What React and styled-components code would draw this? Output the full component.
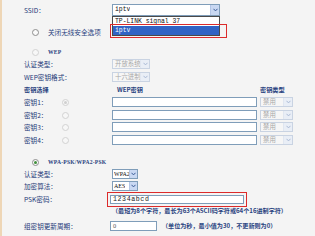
import styled, { createGlobalStyle } from "styled-components";

const GlobalStyle = createGlobalStyle`
  html, body {
    margin: 0;
    padding: 0;
    background: #f4f4f4;
  }
  body {
    font-family: "Noto Sans CJK SC", "DejaVu Sans", sans-serif;
  }
`;

const keys = [1, 2, 3, 4];

export default function App() {
  return (
    <>
      <GlobalStyle />
      <Page>
        <Row $mt={4}>
          <Label>SSID：</Label>
          <SelectWrap>
            <Select $w={108} $h={12} $mono>
              <SelectText>iptv</SelectText>
              <Arrow $h={10}>
                <Chevron />
              </Arrow>
            </Select>
            <DropList>
              <DropItem>TP-LINK signal 37</DropItem>
              <DropItem $active>iptv</DropItem>
            </DropList>
            <RedBox />
          </SelectWrap>
        </Row>

        <Row $mt={10}>
          <RadioCell>
            <Radio />
          </RadioCell>
          <RadioText>关闭无线安全选项</RadioText>
        </Row>

        <Row $mt={8}>
          <RadioCell>
            <Radio $faded />
          </RadioCell>
          <RadioText $small>WEP</RadioText>
        </Row>

        <Row>
          <Label>认证类型：</Label>
          <Select $w={38} $disabled>
            <SelectText>开放系统</SelectText>
            <Arrow $disabled>
              <Chevron $disabled />
            </Arrow>
          </Select>
        </Row>

        <Row $mt={1}>
          <Label>WEP密钥格式：</Label>
          <Select $w={38} $disabled>
            <SelectText>十六进制</SelectText>
            <Arrow $disabled>
              <Chevron $disabled />
            </Arrow>
          </Select>
        </Row>

        <KeyGrid $mt={1}>
          <HeadText style={{ gridColumn: "1 / 3" }}>密钥选择</HeadText>
          <HeadText $pl={5}>WEP密钥</HeadText>
          <HeadText $pl={3}>密钥类型</HeadText>
        </KeyGrid>

        {keys.map((k) => (
          <KeyGrid key={k} $mt={k % 2 === 0 ? 1 : 0}>
            <Label>密钥{k}：</Label>
            <RadioSlot>
              <Radio $faded $dot={k === 1} />
            </RadioSlot>
            <TextInput $w={145} />
            <Select $w={33} $disabled>
              <SelectText>禁用</SelectText>
              <Arrow $disabled>
                <Chevron $disabled />
              </Arrow>
            </Select>
          </KeyGrid>
        ))}

        <Row $mt={10}>
          <RadioCell>
            <Radio $checked />
          </RadioCell>
          <RadioText $small>WPA-PSK/WPA2-PSK</RadioText>
        </Row>

        <Row>
          <Label>认证类型：</Label>
          <Select $w={26} $tight>
            <SelectText>WPA2</SelectText>
            <Arrow $narrow>
              <Chevron />
            </Arrow>
          </Select>
        </Row>

        <Row>
          <Label>加密算法：</Label>
          <Select $w={26} $tight>
            <SelectText>AES</SelectText>
            <Arrow $narrow>
              <Chevron />
            </Arrow>
          </Select>
        </Row>

        <Row $mt={1}>
          <Label>PSK密码：</Label>
          <PskFrame>
            <PskInput>1234abcd</PskInput>
          </PskFrame>
        </Row>

        <Row>
          <Label />
          <Note>（最短为8个字符，最长为63个ASCII码字符或64个16进制字符）</Note>
        </Row>

        <Row $mt={3}>
          <Label>组密钥更新周期：</Label>
          <GroupInput>0</GroupInput>
          <Note $pl={5}>（单位为秒，最小值为30，不更新则为0）</Note>
        </Row>
      </Page>
    </>
  );
}

function Chevron({ $disabled }) {
  return (
    <svg width="5" height="4" viewBox="0 0 5 4">
      <path
        d="M0.5 0.8 L2.5 2.9 L4.5 0.8"
        fill="none"
        stroke={$disabled ? "#a9b9d4" : "#3a5a96"}
        strokeWidth="1"
      />
    </svg>
  );
}

const Page = styled.div`
  width: 315px;
  height: 236px;
  box-sizing: border-box;
  padding-left: 24px;
  border-left: 2px solid #eed6b6;
  overflow: hidden;
  color: #1f3a78;
  font-size: 6.6px;
  line-height: 12px;
`;

const Row = styled.div`
  display: flex;
  align-items: center;
  height: 12px;
  margin-top: ${(p) => p.$mt || 0}px;
  margin-left: -2px;
`;

const Label = styled.div`
  width: 88px;
  flex: none;
  white-space: nowrap;
  color: #1f3a78;
`;

const RadioCell = styled.div`
  width: 24px;
  flex: none;
  display: flex;
  justify-content: flex-start;
  padding-left: 8px;
  box-sizing: border-box;
`;

const RadioText = styled.span`
  white-space: nowrap;
  font-size: ${(p) => (p.$small ? "5.6px" : "6.6px")};
  font-family: ${(p) =>
    p.$small
      ? '"Liberation Serif", "Noto Sans CJK SC", serif'
      : '"Noto Sans CJK SC", sans-serif'};
  font-weight: ${(p) => (p.$small ? 700 : 400)};
  color: #2a4380;
  letter-spacing: ${(p) => (p.$small ? "0.2px" : "0")};
`;

const Radio = styled.span`
  width: 7px;
  height: 7px;
  border-radius: 50%;
  box-sizing: border-box;
  border: 1px solid ${(p) => (p.$faded ? "#d2d2d2" : "#8e8e8e")};
  background: ${(p) => (p.$faded ? "#f7f7f7" : "#fafafa")};
  display: inline-flex;
  align-items: center;
  justify-content: center;
  &::after {
    content: "";
    width: 3px;
    height: 3px;
    border-radius: 50%;
    background: ${(p) =>
      p.$checked ? "#3f8f3a" : p.$dot ? "#cfcfcf" : "transparent"};
  }
`;

const SelectWrap = styled.div`
  position: relative;
`;

const Select = styled.div`
  width: ${(p) => p.$w}px;
  height: ${(p) => p.$h || 10}px;
  box-sizing: border-box;
  border: 1px solid ${(p) => (p.$disabled ? "#c9d3e2" : "#7f9db9")};
  background: ${(p) => (p.$disabled ? "#f6f6f6" : "#ffffff")};
  color: ${(p) => (p.$disabled ? "#a8a8a8" : "#111")};
  display: flex;
  align-items: center;
  justify-content: space-between;
  padding-left: ${(p) => (p.$tight ? 1 : 2)}px;
  font-family: ${(p) =>
    p.$mono
      ? '"Liberation Mono", monospace'
      : '"Liberation Serif", "Noto Sans CJK SC", serif'};
  font-size: ${(p) => (p.$tight ? 6 : 6.4)}px;
  line-height: 8px;
  flex: none;
`;

const SelectText = styled.span`
  white-space: nowrap;
  overflow: hidden;
`;

const Arrow = styled.span`
  width: ${(p) => (p.$narrow ? 7 : 8)}px;
  height: ${(p) => p.$h || 8}px;
  flex: none;
  background: ${(p) => (p.$disabled ? "#e9eef6" : "#c9d8f2")};
  border-left: 1px solid ${(p) => (p.$disabled ? "#e0e6f0" : "#b3c5e6")};
  display: flex;
  align-items: center;
  justify-content: center;
`;

const DropList = styled.div`
  position: absolute;
  left: 0;
  top: 12px;
  width: 108px;
  box-sizing: border-box;
  border: 1px solid #4a4a4a;
  background: #fff;
  z-index: 2;
`;

const DropItem = styled.div`
  height: 9px;
  line-height: 9px;
  padding-left: 2px;
  font-family: "Liberation Mono", monospace;
  font-size: 6.4px;
  color: ${(p) => (p.$active ? "#fff" : "#111")};
  background: ${(p) => (p.$active ? "#3163c4" : "#fff")};
`;

const RedBox = styled.div`
  position: absolute;
  left: -2px;
  top: 20px;
  width: 117px;
  height: 14px;
  box-sizing: border-box;
  border: 1.5px solid #dc2b2b;
  z-index: 3;
`;

const KeyGrid = styled.div`
  display: grid;
  grid-template-columns: 38px 50px 145px 36px;
  align-items: center;
  height: 12px;
  margin-top: ${(p) => p.$mt || 0}px;
  margin-left: -2px;
  & > :nth-child(4) {
    margin-left: 3px;
  }
`;

const HeadText = styled.div`
  white-space: nowrap;
  padding-left: ${(p) => p.$pl || 0}px;
  color: #2a4380;
  font-weight: 700;
  font-size: 6.2px;
`;

const RadioSlot = styled.div`
  display: flex;
  align-items: center;
`;

const TextInput = styled.div`
  width: ${(p) => p.$w}px;
  height: 10px;
  box-sizing: border-box;
  border: 1px solid #7f9db9;
  background: #fff;
`;

const PskFrame = styled.div`
  margin-left: -5px;
  padding: 2px;
  border: 1.5px solid #dc2b2b;
  display: flex;
`;

const PskInput = styled.div`
  width: 134px;
  height: 9px;
  box-sizing: border-box;
  border: 1px solid #7f9db9;
  background: #fff;
  font-family: "Liberation Mono", monospace;
  font-size: 6.6px;
  letter-spacing: 0.6px;
  line-height: 7px;
  padding-left: 2px;
  color: #222;
`;

const GroupInput = styled.div`
  width: 47px;
  height: 10px;
  box-sizing: border-box;
  margin-left: -2px;
  border: 1px solid #7f9db9;
  background: #fff;
  font-family: "Liberation Serif", serif;
  font-size: 6.4px;
  line-height: 8px;
  padding-left: 2px;
  color: #555;
  flex: none;
`;

const Note = styled.span`
  white-space: nowrap;
  font-size: 6.1px;
  padding-left: ${(p) => p.$pl || 0}px;
  color: #2a4380;
  font-weight: 700;
`;
